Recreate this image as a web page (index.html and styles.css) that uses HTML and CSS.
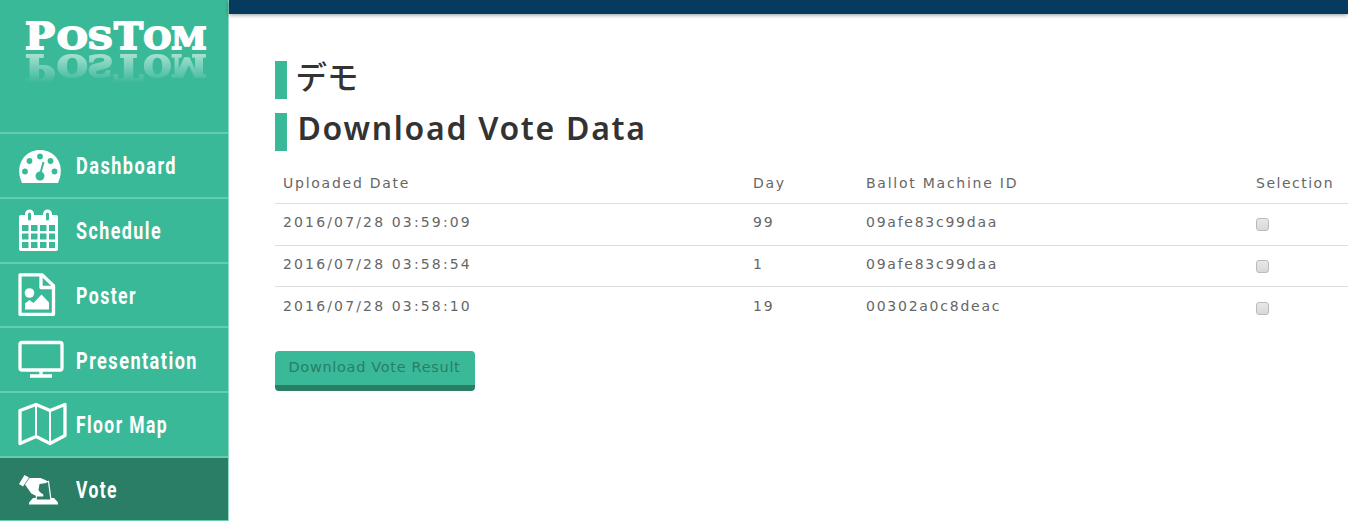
FILE: index.html
```html
<!DOCTYPE html>
<html lang="en">
<head>
<meta charset="utf-8">
<title>PosTom</title>
<link rel="stylesheet" href="styles.css">
</head>
<body>
<div class="app">
  <aside class="sidebar">
    <svg class="logo" width="228" height="132" viewBox="0 0 228 132">
      <defs>
        <linearGradient id="fade" x1="0" y1="53" x2="0" y2="83" gradientUnits="userSpaceOnUse">
          <stop offset="0" stop-color="#fff" stop-opacity=".58"/>
          <stop offset="1" stop-color="#fff" stop-opacity="0"/>
        </linearGradient>
        <mask id="mirror-mask" maskUnits="userSpaceOnUse" x="0" y="52" width="228" height="34"><rect y="52" width="228" height="34" fill="url(#fade)"/></mask>
        <g id="wordmark">
          <text y="49.300"><tspan class="cap" x="25" textLength="30" lengthAdjust="spacingAndGlyphs">P</tspan><tspan class="small" x="57" textLength="56" lengthAdjust="spacingAndGlyphs">OS</tspan><tspan class="cap" x="114" textLength="29" lengthAdjust="spacingAndGlyphs">T</tspan><tspan class="small" x="143.500" textLength="63" lengthAdjust="spacingAndGlyphs">OM</tspan></text>
        </g>
      </defs>
      <use href="#wordmark"/>
      <g mask="url(#mirror-mask)"><use href="#wordmark" transform="translate(0 104) scale(1 -1)"/></g>
    </svg>
    <nav class="menu">
      <a class="item">
        <svg class="icon" viewBox="0 0 50 64" width="50" height="64"><g transform="translate(0 -2)"><path fill="#fff" d="M4 52C-4 35 6 19 22 19s26 16 18 33z"/><g class="cut"><circle cx="22" cy="25.500" r="2.900"/><circle cx="11.500" cy="30" r="2.900"/><circle cx="32.500" cy="30" r="2.900"/><circle cx="7" cy="40.500" r="2.900"/><circle cx="36.500" cy="40.500" r="2.900"/><circle cx="22" cy="45" r="4.500"/></g><path class="cut-line" d="M22 44l3.500-13"/></g></svg>
        <svg class="label" width="130" height="40"><text y="28.500" textLength="101" lengthAdjust="spacingAndGlyphs">Dashboard</text></svg>
      </a>
      <a class="item">
        <svg class="icon" viewBox="0 0 50 64" width="50" height="64"><rect x="1" y="17" width="39" height="36" rx="2" fill="#fff"/><g class="cut"><rect x="4" y="27" width="6.500" height="6"/><rect x="13" y="27" width="6.500" height="6"/><rect x="22" y="27" width="6.500" height="6"/><rect x="31" y="27" width="6" height="6"/><rect x="4" y="35.500" width="6.500" height="6"/><rect x="13" y="35.500" width="6.500" height="6"/><rect x="22" y="35.500" width="6.500" height="6"/><rect x="31" y="35.500" width="6" height="6"/><rect x="4" y="44" width="6.500" height="6"/><rect x="13" y="44" width="6.500" height="6"/><rect x="22" y="44" width="6.500" height="6"/><rect x="31" y="44" width="6" height="6"/></g><rect class="ring" x="8.500" y="13" width="6" height="11" rx="3"/><rect class="ring" x="26.500" y="13" width="6" height="11" rx="3"/></svg>
        <svg class="label" width="130" height="40"><text y="28.500" textLength="86" lengthAdjust="spacingAndGlyphs">Schedule</text></svg>
      </a>
      <a class="item">
        <svg class="icon" viewBox="0 0 50 64" width="50" height="64"><path class="stroke" d="M2 11.800h22l11.500 11V51.300H2z"/><path class="stroke" d="M23 12v12.500h12.500"/><circle cx="11.500" cy="30" r="4.800" fill="#fff"/><path fill="#fff" d="M7 46.500v-6l4.500-3.500 4 3 8-8.500 7.500 8v7z"/></svg>
        <svg class="label" width="130" height="40"><text y="28.500" textLength="61" lengthAdjust="spacingAndGlyphs">Poster</text></svg>
      </a>
      <a class="item">
        <svg class="icon" viewBox="0 0 50 64" width="50" height="64"><rect class="stroke" x="2" y="14.500" width="42" height="27.500" rx="2"/><path class="stroke" d="M23 42.500v6M12 48h22"/></svg>
        <svg class="label" width="130" height="40"><text y="28.500" textLength="122" lengthAdjust="spacingAndGlyphs">Presentation</text></svg>
      </a>
      <a class="item">
        <svg class="icon" viewBox="0 0 50 64" width="50" height="64"><path class="stroke" d="M2 18.500l16-6 14 6 15-6v31l-15 8-14-7-16 7z"/><path class="fold" d="M18 12.500v32M32 18.500v33"/></svg>
        <svg class="label" width="130" height="40"><text y="28.500" textLength="92" lengthAdjust="spacingAndGlyphs">Floor Map</text></svg>
      </a>
      <a class="item active">
        <svg class="icon" viewBox="0 0 50 64" width="50" height="64"><path fill="#fff" d="M15 41h21l4 4.500v2H11v-2z"/><path class="slot" d="M20 26l10.500-1.500L33 43H18z"/><g fill="#fff"><path d="M1 27l5.500-9 4.500 2.500-6 9z"/><path d="M7 27.500l4.500-6.500h11l6 2.500v2.500l-7 1-1 6 1.300 2 3.500 2.500v2h-6l-6-3z"/></g></svg>
        <svg class="label" width="130" height="40"><text y="28.500" textLength="42" lengthAdjust="spacingAndGlyphs">Vote</text></svg>
      </a>
    </nav>
  </aside>
  <main class="main">
    <div class="topbar"></div>
    <div class="content">
      <h1 class="heading jp">デモ</h1>
      <h1 class="heading">Download Vote Data</h1>
      <div class="table">
        <div class="row head"><span>Uploaded Date</span><span>Day</span><span>Ballot Machine ID</span><span>Selection</span></div>
        <div class="row"><span class="date">2016/07/28 03:59:09</span><span>99</span><span>09afe83c99daa</span><span><i class="check"></i></span></div>
        <div class="row"><span class="date">2016/07/28 03:58:54</span><span>1</span><span>09afe83c99daa</span><span><i class="check"></i></span></div>
        <div class="row"><span class="date">2016/07/28 03:58:10</span><span>19</span><span>00302a0c8deac</span><span><i class="check"></i></span></div>
      </div>
      <button class="download">Download Vote Result</button>
    </div>
  </main>
</div>
</body>
</html>
```
FILE: styles.css
```css
* { box-sizing: border-box; }
body { margin: 0; background: #fff; overflow: hidden; font-family: "DejaVu Sans", "Noto Sans CJK JP", sans-serif; }
.app { display: flex; width: 1348px; height: 521px; }
.sidebar { flex: 0 0 229px; background: #3ab998; border-right: 1px solid #8fd8c4; }
.logo { display: block; }
.logo text { font-family: "DejaVu Serif", serif; font-weight: 700; fill: #fff; stroke: #fff; stroke-width: 1.8px; }
.cap { font-size: 37px; }
.small { font-size: 29.5px; }
.menu { border-bottom: 1px solid #66cdb3; }
.item { display: flex; align-items: center; height: 64.75px; padding-left: 18px; border-top: 2px solid #62cdb1; --bg: #3ab998; }
.item.active { height: 63.75px; background: #297e65; --bg: #297e65; }
.icon { flex: 0 0 50px; margin-right: 8px; }
.label { display: block; overflow: visible; }
.label text { font-family: Roboto, sans-serif; font-size: 23.5px; font-weight: 700; letter-spacing: 1.9px; fill: #fff; }
.cut { fill: var(--bg); }
.cut-line { stroke: var(--bg); stroke-width: 2px; fill: none; }
.ring { fill: var(--bg); stroke: #fff; stroke-width: 3px; }
.stroke { fill: none; stroke: #fff; stroke-width: 3.3px; stroke-linejoin: round; }
.fold { fill: none; stroke: #fff; stroke-width: 2px; }
.slot { fill: var(--bg); stroke: #fff; stroke-width: 1.2px; }
.main { flex: 1; min-width: 0; }
.topbar { height: 14px; background: #063a5e; box-shadow: 0 1px 4px rgba(0,0,0,.4); }
.content { padding: 46.5px 0 0 45.5px; }
.heading { height: 38px; margin: 0 0 14px; padding-left: 11px; border-left: 12px solid #3ab998; font-family: "Noto Sans", sans-serif; font-size: 32px; line-height: 30px; font-weight: 600; color: #333; letter-spacing: 1.7px; white-space: nowrap; }
.heading.jp { padding-left: 9px; font-family: "Noto Sans CJK JP", sans-serif; font-size: 31.5px; font-weight: 500; line-height: 28px; letter-spacing: 0; }
.table { margin-top: 14px; font-size: 14px; color: #666; letter-spacing: 1.75px; }
.date { letter-spacing: 2.15px; }
.row { display: grid; grid-template-columns: 470px 113px 390px 1fr; height: 41.7px; padding: 9.5px 0 0 8.5px; line-height: 18px; border-top: 1px solid #ddd; white-space: nowrap; }
.row.head { height: 38.4px; padding-top: 9px; border-top: 0; }
.row.head span:last-child { letter-spacing: 1.5px; }
.check { display: block; width: 13px; height: 13px; margin: 5px 0 0; border: 1px solid #bbb; border-radius: 3px; background: linear-gradient(#e8e8e8, #d8d8d8); }
.download { display: block; width: 200px; height: 40px; margin-top: 22.8px; padding: 0 0 2px; border: 0; border-bottom: 6px solid #297e65; border-radius: 4px; background: #3ab998; color: #297e65; font: 14.5px "DejaVu Sans", sans-serif; letter-spacing: .68px; }
```
